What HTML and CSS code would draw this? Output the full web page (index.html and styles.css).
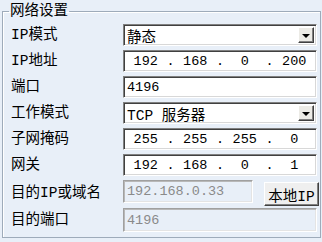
FILE: index.html
```html
<!DOCTYPE html>
<html lang="zh-CN">
<head>
    <meta charset="UTF-8">
    <meta name="viewport" content="width=device-width, initial-scale=1.0">
    <title>网络设置</title>
    <link rel="stylesheet" href="styles.css">
</head>
<body>
    <fieldset class="group">
        <legend>网络设置</legend>

        <div class="form">
            <div class="lbl">IP模式</div>
            <div class="field combo">
                <span class="value">静态</span>
                <span class="drop"><i class="arrow"></i></span>
            </div>

            <div class="lbl">IP地址</div>
            <div class="field ip">
                <span class="seg">192</span><span class="dot">.</span>
                <span class="seg">168</span><span class="dot">.</span>
                <span class="seg">0</span><span class="dot">.</span>
                <span class="seg">200</span>
            </div>

            <div class="lbl">端口</div>
            <div class="field text"><span class="num">4196</span></div>

            <div class="lbl">工作模式</div>
            <div class="field combo">
                <span class="value">TCP 服务器</span>
                <span class="drop"><i class="arrow"></i></span>
            </div>

            <div class="lbl">子网掩码</div>
            <div class="field ip">
                <span class="seg">255</span><span class="dot">.</span>
                <span class="seg">255</span><span class="dot">.</span>
                <span class="seg">255</span><span class="dot">.</span>
                <span class="seg">0</span>
            </div>

            <div class="lbl">网关</div>
            <div class="field ip">
                <span class="seg">192</span><span class="dot">.</span>
                <span class="seg">168</span><span class="dot">.</span>
                <span class="seg">0</span><span class="dot">.</span>
                <span class="seg">1</span>
            </div>

            <div class="lbl">目的IP或域名</div>
            <div class="dest">
                <div class="field text disabled short"><span class="num">192.168.0.33</span></div>
                <button class="btn" type="button">本地IP</button>
            </div>

            <div class="lbl last">目的端口</div>
            <div class="field text disabled last tall"><span class="num">4196</span></div>
        </div>
    </fieldset>
</body>
</html>
```

FILE: styles.css
```css
:root {
    --panel-bg: #e8eff8;
    --field-bg: #ffffff;
    --frame: #9eabba;
    --shadow-dark: #808080;
    --shadow-darker: #404040;
    --light: #ffffff;
    --muted: #8a8a8a;
    --ui-font: "Liberation Mono", "Noto Sans CJK SC", monospace;
}

* {
    margin: 0;
    padding: 0;
    box-sizing: border-box;
}

body {
    background: var(--panel-bg);
    font-family: var(--ui-font);
    font-size: 14.5px;
    color: #000;
    width: 322px;
    height: 242px;
    overflow: hidden;
}

.group {
    margin: 2px 1px 0 2px;
    padding: 4px 3px 5px 8px;
    border: 1px solid var(--frame);
    box-shadow: inset 1px 1px 0 var(--light);
}

.group legend {
    margin-left: -2px;
    padding: 0 1px;
    line-height: 18px;
}

.form {
    display: grid;
    grid-template-columns: 112px 1fr;
    row-gap: 4px;
    align-items: center;
}

.lbl {
    line-height: 18px;
    white-space: nowrap;
}

.lbl.last,
.field.last {
    margin-top: -2px;
}

/* sunken edit box */
.field {
    height: 22px;
    background: var(--field-bg);
    border-top: 1px solid var(--shadow-dark);
    border-left: 1px solid var(--shadow-dark);
    border-right: 1px solid var(--light);
    border-bottom: 1px solid var(--light);
    box-shadow: inset 1px 1px 0 var(--shadow-darker), inset -1px -1px 0 #d8d8d8;
    display: flex;
    align-items: center;
}

.field.tall {
    height: 24px;
}

.text {
    padding-left: 3px;
}

.num,
.seg,
.dot {
    font-size: 13.5px;
}

.disabled {
    background: var(--panel-bg);
    color: var(--muted);
    border-top-color: #a0a0a0;
    border-left-color: #a0a0a0;
    box-shadow: inset 1px 1px 0 #b8b8b8, inset -1px -1px 0 #e4e4e4;
}

/* combo box */
.combo {
    padding: 0 2px 0 3px;
}

.combo .value {
    flex: 1;
}

.drop {
    width: 16px;
    height: 16px;
    background: #ecebe6;
    border-top: 1px solid var(--light);
    border-left: 1px solid var(--light);
    border-right: 1px solid var(--shadow-darker);
    border-bottom: 1px solid var(--shadow-darker);
    box-shadow: inset -1px -1px 0 var(--shadow-dark);
    display: flex;
    align-items: center;
    justify-content: center;
}

.arrow {
    width: 0;
    height: 0;
    border-left: 4px solid transparent;
    border-right: 4px solid transparent;
    border-top: 4px solid #000;
    margin-top: 1px;
}

/* ip address control */
.ip {
    padding: 0 1px;
}

.seg {
    flex: 1;
    text-align: center;
}

.dot {
    width: 8px;
    text-align: center;
}

/* destination row */
.dest {
    display: flex;
    align-items: flex-start;
    gap: 11px;
    height: 26px;
    margin-right: -3px;
}

.field.short {
    width: 130px;
    height: 23px;
}

.btn {
    margin-top: 2px;
    width: 55px;
    height: 24px;
    padding: 0;
    font-family: var(--ui-font);
    font-size: 14.5px;
    color: #000;
    background: #efefef;
    border-top: 1px solid var(--light);
    border-left: 1px solid var(--light);
    border-right: 1px solid var(--shadow-darker);
    border-bottom: 1px solid var(--shadow-darker);
    box-shadow: inset -1px -1px 0 var(--shadow-dark);
}
```
